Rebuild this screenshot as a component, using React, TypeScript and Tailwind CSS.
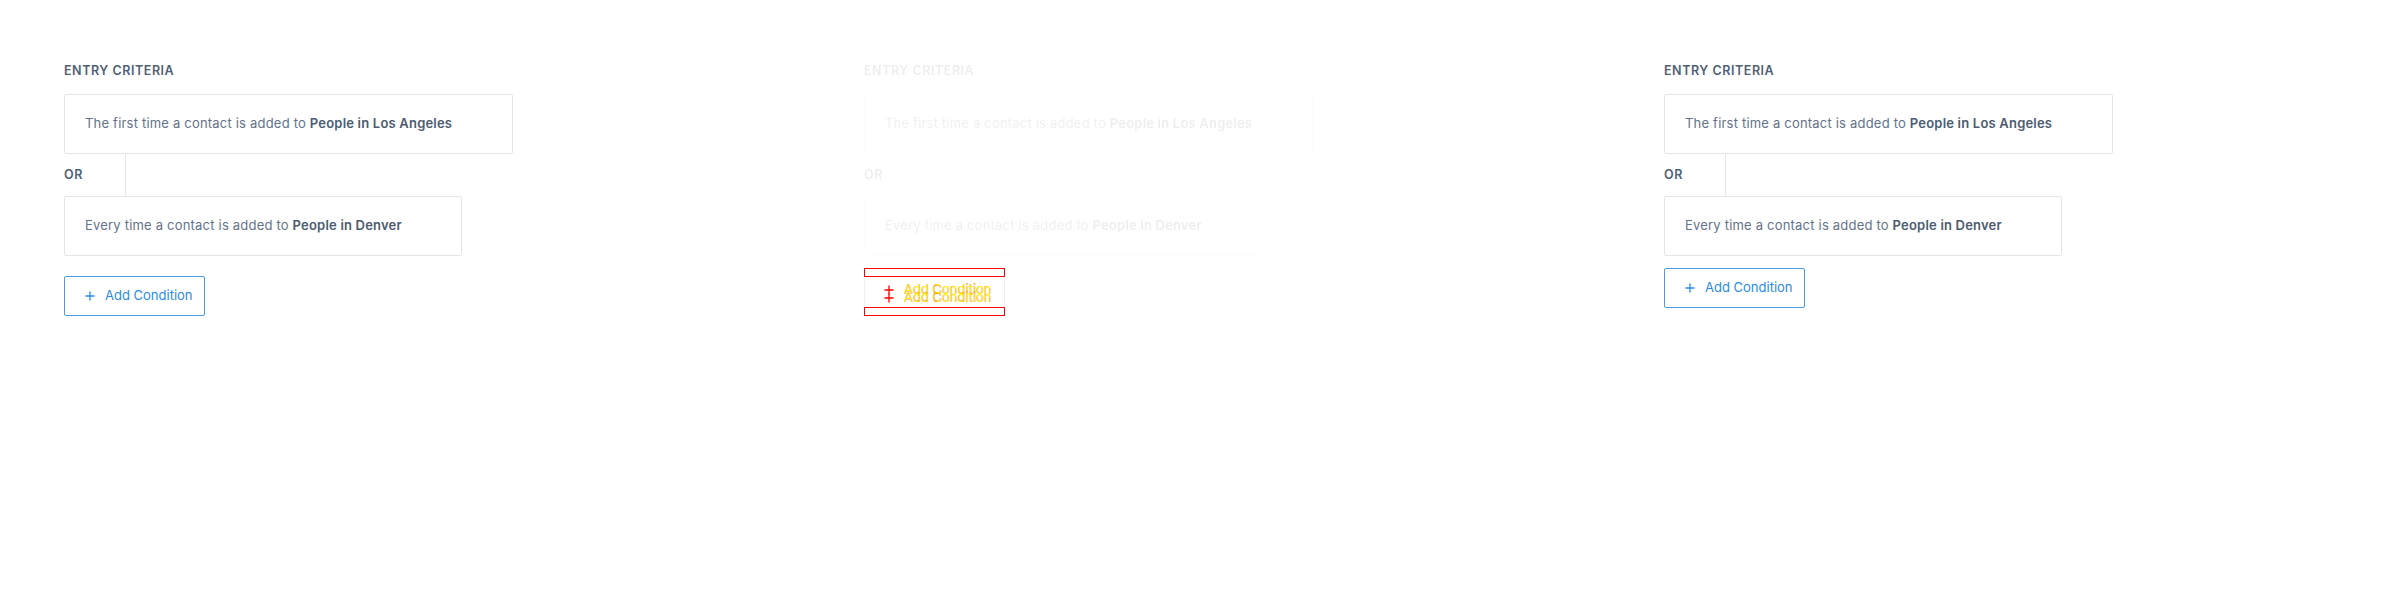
import React from "react";

const font = { fontFamily: "Inter, 'Noto Sans', sans-serif" };

function PlusIcon({ className = "" }: { className?: string }) {
  return (
    <svg width="10" height="10" viewBox="0 0 10 10" className={className}>
      <path d="M5 0.5v9M0.5 5h9" stroke="currentColor" strokeWidth="1.3" fill="none" />
    </svg>
  );
}

function Criteria() {
  return (
    <>
      <div className="h-4 text-[12.5px] leading-4 font-semibold tracking-[0.55px] text-[#4f5f75]">ENTRY CRITERIA</div>
      <div className="mt-[15px] w-[449px] h-[60px] border border-[#e2e5e9] rounded-[2px] pl-5 flex items-center text-[13px] tracking-[0.2px] text-[#637289]">
        <span>
          The first time a contact is added to <span className="font-semibold text-[#4c5b71]">People in Los Angeles</span>
        </span>
      </div>
      <div className="flex h-[42px]">
        <div className="w-[61px] flex items-center text-[12.5px] font-semibold tracking-[0.55px] text-[#4f5f75]">OR</div>
        <div className="border-l border-[#e2e5e9]" />
      </div>
      <div className="w-[398px] h-[60px] border border-[#e2e5e9] rounded-[2px] pl-5 flex items-center text-[13px] tracking-[0.2px] text-[#637289]">
        <span>
          Every time a contact is added to <span className="font-semibold text-[#4c5b71]">People in Denver</span>
        </span>
      </div>
    </>
  );
}

function AddButton({ mt }: { mt: string }) {
  return (
    <div
      className={`${mt} w-[141px] h-10 border border-[#4b9ae9] rounded-[2px] flex items-center pl-5 gap-[10px] text-[13px] text-[#2a8ae6]`}
    >
      <PlusIcon />
      <span>Add Condition</span>
    </div>
  );
}

function DiffButton() {
  return (
    <div className="relative mt-3 w-[141px] h-[48px]">
      <div className="absolute left-0 top-2 w-[141px] h-[32px] border-x border-[#f0f0f0]" />
      <div className="absolute left-0 top-0 w-[141px] h-[9px] border border-[#ff0000]" />
      <div className="absolute left-0 top-[39px] w-[141px] h-[9px] border border-[#ff0000]" />
      <div className="absolute left-5 top-[12px] flex items-center gap-[10px] text-[13px] text-[#fff200] [-webkit-text-stroke:0.15px_#ff0000]">
        <PlusIcon className="text-[#ff0000]" />
        <span>Add Condition</span>
      </div>
      <div className="absolute left-5 top-[20px] flex items-center gap-[10px] text-[13px] text-[#fff200] [-webkit-text-stroke:0.15px_#ff0000]">
        <PlusIcon className="text-[#ff0000]" />
        <span>Add Condition</span>
      </div>
    </div>
  );
}

export default function App() {
  return (
    <div className="w-[2400px] h-[600px] bg-white flex" style={font}>
      <div className="w-[800px] pl-16 pt-[63px] flex flex-col items-start">
        <Criteria />
        <AddButton mt="mt-5" />
      </div>
      <div className="w-[800px] pl-16 pt-[63px] flex flex-col items-start">
        <div className="opacity-[0.1] grayscale flex flex-col items-start">
          <Criteria />
        </div>
        <DiffButton />
      </div>
      <div className="w-[800px] pl-16 pt-[63px] flex flex-col items-start">
        <Criteria />
        <AddButton mt="mt-3" />
      </div>
    </div>
  );
}
